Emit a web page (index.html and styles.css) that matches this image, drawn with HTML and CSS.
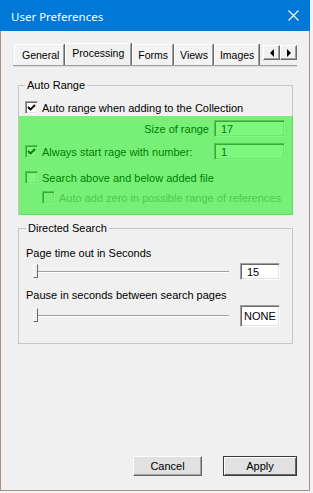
FILE: index.html
```html
<!DOCTYPE html>
<html lang="en">
<head>
  <meta charset="UTF-8">
  <meta name="viewport" content="width=device-width, initial-scale=1">
  <title>User Preferences</title>
  <link rel="stylesheet" href="styles.css">
</head>
<body>

<div class="window">
  <div class="titlebar">
    <span class="title">User Preferences</span>
    <svg class="close" width="11" height="11" viewBox="0 0 11 11">
      <path d="M0.5 0.5 L10.5 10.5 M10.5 0.5 L0.5 10.5" stroke="#fff" stroke-width="1.1" fill="none"/>
    </svg>
  </div>

  <div class="content">
    <div class="tabs">
      <div class="tab">General</div>
      <div class="tab active">Processing</div>
      <div class="tab">Forms</div>
      <div class="tab">Views</div>
      <div class="tab">Images</div>
      <div class="tab-scroll">
        <span class="scroll-btn"><span class="arrow left"></span></span>
        <span class="scroll-btn"><span class="arrow right"></span></span>
      </div>
    </div>

    <!-- Auto Range -->
    <fieldset class="group auto-range">
      <legend>Auto Range</legend>
      <div class="row">
        <span class="check"><svg width="9" height="9" viewBox="0 0 9 9"><path d="M1 4 L3.5 6.5 L8 2" stroke="#000" stroke-width="1.8" fill="none"/></svg></span>
        <span>Auto range when adding to the Collection</span>
      </div>
      <div class="highlight">
        <div class="row size-row">
          <span class="size-label">Size of range</span>
          <span class="field">17</span>
        </div>
        <div class="row start-row">
          <span class="check"><svg width="9" height="9" viewBox="0 0 9 9"><path d="M1 4 L3.5 6.5 L8 2" stroke="#000" stroke-width="1.8" fill="none"/></svg></span>
          <span>Always start rage with number:</span>
          <span class="field">1</span>
        </div>
        <div class="row search-row">
          <span class="check"></span>
          <span>Search above and below added file</span>
        </div>
        <div class="row zero-row disabled">
          <span class="check"></span>
          <span>Auto add zero in possible range of references</span>
        </div>
      </div>
    </fieldset>

    <!-- Directed Search -->
    <fieldset class="group directed">
      <legend>Directed Search</legend>
      <div class="label-row">Page time out in Seconds</div>
      <div class="slider-row">
        <div class="slider"><span class="thumb"></span></div>
        <span class="field small">15</span>
      </div>
      <div class="label-row pause">Pause in seconds between search pages</div>
      <div class="slider-row">
        <div class="slider"><span class="thumb"></span></div>
        <span class="field small tall">NONE</span>
      </div>
    </fieldset>

    <div class="buttons">
      <button class="btn cancel">Cancel</button>
      <button class="btn apply">Apply</button>
    </div>
  </div>
</div>

</body>
</html>
```

FILE: styles.css
```css
* {
  box-sizing: border-box;
}
body {
  margin: 0;
  background: #f3f3f3;
  font-family: "Liberation Sans", Arial, sans-serif;
  font-size: 11px;
  color: #000;
}
.window {
  width: 310px;
  height: 491px;
  border: 1px solid #a98f80;
  border-top: none;
  background: #f0f0f0;
  display: flex;
  flex-direction: column;
}
.titlebar {
  height: 31px;
  margin: 0 -1px;
  background: #0078d7;
  color: #fff;
  display: flex;
  align-items: center;
  justify-content: space-between;
  padding: 0 10px 0 11px;
}
.title {
  font-family: "Noto Sans", sans-serif;
  font-size: 11.5px;
  margin-top: 1px;
}
.close {
  display: block;
  margin-right: 1px;
}
.content {
  flex: 1;
  display: flex;
  flex-direction: column;
  padding: 12px 12px 14px 12px;
}

/* Tabs */
.tabs {
  display: flex;
  align-items: flex-end;
  height: 23px;
  border-bottom: 1px solid #a0a0a0;
  box-shadow: 0 1px 0 #dcdcdc;
}
.tab {
  flex-shrink: 0;
  height: 21px;
  padding: 4px 4px 0 5px;
  font-size: 10.5px;
  background: #f3f3f3;
  border-top: 1px solid #fff;
  border-left: 1px solid #fff;
  border-right: 1px solid #a0a0a0;
  box-shadow: 1px 0 0 #696969;
  margin-right: 1px;
}
.tab:first-child {
  margin-left: 1px;
  padding-left: 7px;
}
.tab.active {
  height: 22px;
  padding: 3px 6px 0 6px;
  background: #f0f0f0;
}
.tab-scroll {
  display: flex;
  flex-shrink: 0;
  align-self: flex-start;
  margin-top: 2px;
  margin-left: auto;
}
.scroll-btn {
  width: 17px;
  height: 15px;
  background: #f0f0f0;
  border: 1px solid;
  border-color: #fff #696969 #696969 #fff;
  box-shadow: inset -1px -1px 0 #a0a0a0;
  display: flex;
  align-items: center;
  justify-content: center;
}
.arrow {
  width: 0;
  height: 0;
  border-top: 4px solid transparent;
  border-bottom: 4px solid transparent;
}
.arrow.left {
  border-right: 4px solid #000;
}
.arrow.right {
  border-left: 4px solid #000;
}

/* Group boxes */
.group {
  margin: 12px 4px 0 5px;
  padding: 0 6px;
  border: 1px solid #c6c6c6;
  min-width: 0;
}
.group legend {
  padding: 0 2px;
  height: 14px;
  line-height: 14px;
}
.row {
  display: flex;
  align-items: center;
  height: 17px;
}
.auto-range > .row {
  margin-top: 7px;
}
.check {
  width: 13px;
  height: 13px;
  margin-right: 4px;
  background: #fff;
  border: 1px solid;
  border-color: #a0a0a0 #fff #fff #a0a0a0;
  box-shadow: inset 1px 1px 0 #696969, inset -1px -1px 0 #e3e3e3;
  display: flex;
  align-items: center;
  justify-content: center;
}
.field {
  width: 71px;
  height: 17px;
  margin-left: auto;
  padding: 2px 0 0 6px;
  background: #fff;
  border: 1px solid;
  border-color: #a0a0a0 #fff #fff #a0a0a0;
  box-shadow: inset 1px 1px 0 #696969, inset -1px -1px 0 #e3e3e3;
}

/* green highlighted area */
.highlight {
  position: relative;
  margin: 0 -7px -1px -6px;
  padding: 4px 8px 9px 6px;
}
.highlight::after {
  content: "";
  position: absolute;
  inset: 0;
  background: rgba(0, 240, 0, 0.5);
  pointer-events: none;
}
.size-label {
  margin-left: auto;
  margin-right: 5px;
}
.size-row .field {
  margin-left: 0;
}
.start-row {
  margin-top: 6px;
}
.search-row {
  margin-top: 9px;
}
.zero-row {
  margin-top: 3px;
  padding-left: 17px;
}
.disabled {
  color: #a0a0a0;
}
.disabled .check {
  background: #f0f0f0;
}

/* Directed search */
.directed {
  margin-top: 6px;
  padding: 0 12px 16px 7px;
}
.label-row {
  height: 14px;
  line-height: 14px;
  margin-top: 11px;
}
.label-row.pause {
  margin-top: 8px;
}
.slider-row {
  display: flex;
  align-items: center;
  margin-top: 3px;
}
.slider {
  position: relative;
  flex: 1;
  height: 2px;
  margin: 0 11px 0 8px;
  border-top: 1px solid #a0a0a0;
  border-bottom: 1px solid #fff;
}
.thumb {
  position: absolute;
  left: -1px;
  top: -8px;
  width: 5px;
  height: 14px;
  background: #f0f0f0;
  border: 1px solid;
  border-color: #fff #696969 #696969 #fff;
}
.field.small {
  width: 40px;
}
.field.tall {
  height: 22px;
  padding: 4px 0 0 3px;
}

/* Buttons */
.buttons {
  margin-top: auto;
  display: flex;
  justify-content: flex-end;
  gap: 21px;
}
.btn {
  height: 20px;
  font-family: "Liberation Sans", Arial, sans-serif;
  font-size: 11px;
  background: #e1e1e1;
  border: 1px solid;
  border-color: #fff #696969 #696969 #fff;
  box-shadow: inset -1px -1px 0 #a0a0a0;
  padding: 0;
}
.cancel {
  width: 69px;
}
.apply {
  width: 74px;
  border: 1px solid #3a3a3a;
  box-shadow: inset 1px 1px 0 #fff, inset -1px -1px 0 #696969;
}
```
